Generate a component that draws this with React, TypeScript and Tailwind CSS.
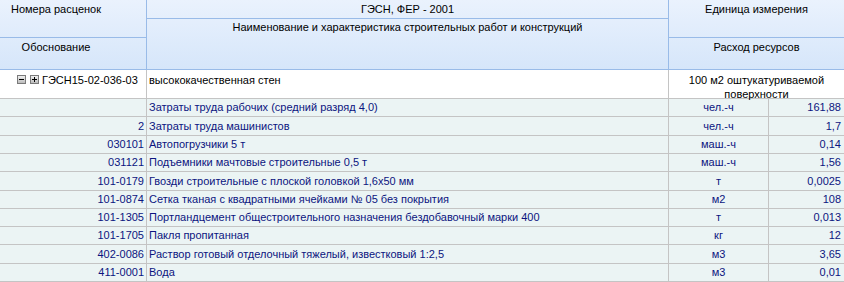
import React from "react";

type Row = { code: string; name: string; unit: string; value: string; h: string };

const rows: Row[] = [
  { code: "", name: "Затраты труда рабочих (средний разряд 4,0)", unit: "чел.-ч", value: "161,88", h: "h-[18px]" },
  { code: "2", name: "Затраты труда машинистов", unit: "чел.-ч", value: "1,7", h: "h-[19px]" },
  { code: "030101", name: "Автопогрузчики 5 т", unit: "маш.-ч", value: "0,14", h: "h-[18px]" },
  { code: "031121", name: "Подъемники мачтовые строительные 0,5 т", unit: "маш.-ч", value: "1,56", h: "h-[18px]" },
  { code: "101-0179", name: "Гвозди строительные с плоской головкой 1,6x50 мм", unit: "т", value: "0,0025", h: "h-[19px]" },
  { code: "101-0874", name: "Сетка тканая с квадратными ячейками № 05 без покрытия", unit: "м2", value: "108", h: "h-[18px]" },
  { code: "101-1305", name: "Портландцемент общестроительного назначения бездобавочный марки 400", unit: "т", value: "0,013", h: "h-[18px]" },
  { code: "101-1705", name: "Пакля пропитанная", unit: "кг", value: "12", h: "h-[18px]" },
  { code: "402-0086", name: "Раствор готовый отделочный тяжелый, известковый 1:2,5", unit: "м3", value: "3,65", h: "h-[19px]" },
  { code: "411-0001", name: "Вода", unit: "м3", value: "0,01", h: "h-[18px]" },
];

const TreeBox = ({ plus }: { plus?: boolean }) => (
  <svg width="9" height="9" viewBox="0 0 9 9" className="shrink-0">
    <defs>
      <linearGradient id={plus ? "gp" : "gm"} x1="0" y1="0" x2="0" y2="1">
        <stop offset="0" stopColor="#f4f4f4" />
        <stop offset="1" stopColor="#b8b8b8" />
      </linearGradient>
    </defs>
    <rect x="0.5" y="0.5" width="8" height="8" fill={`url(#${plus ? "gp" : "gm"})`} stroke="#7a7a7a" />
    <rect x="2" y="4" width="5" height="1" fill="#000" />
    {plus && <rect x="4" y="2" width="1" height="5" fill="#000" />}
  </svg>
);

export default function App() {
  return (
    <div
      className="w-[844px] h-[282px] overflow-hidden bg-white text-[11px] leading-[13px] text-black"
      style={{ fontFamily: '"Liberation Sans", Arial, sans-serif' }}
    >
      {/* header */}
      <div className="flex h-[70px] bg-gradient-to-b from-[#eaf2fd] to-[#d6e6fa] border-b border-[#99bbe8]">
        <div className="w-[147px] flex flex-col border-r border-[#99bbe8]">
          <div className="h-[38px] border-b border-[#99bbe8] pt-[3px] pr-[34px] text-center">Номера расценок</div>
          <div className="flex-1 pt-[3px] pr-[34px] text-center">Обоснование</div>
        </div>
        <div className="w-[522px] flex flex-col border-r border-[#99bbe8]">
          <div className="h-[19px] border-b border-[#99bbe8] pt-[3px] text-center">ГЭСН, ФЕР - 2001</div>
          <div className="flex-1 pt-[2px] text-center">Наименование и характеристика строительных работ и конструкций</div>
        </div>
        <div className="flex-1 flex flex-col">
          <div className="h-[38px] border-b border-[#99bbe8] pt-[3px] text-center">Единица измерения</div>
          <div className="flex-1 pt-[3px] text-center">Расход ресурсов</div>
        </div>
      </div>

      {/* work row */}
      <div className="flex h-[29px] border-b border-[#c4c4c4]">
        <div className="w-[147px] flex items-start border-r border-[#c4c4c4] pl-[17px] pt-[4px] gap-[3px]">
          <div className="flex gap-[4px] pt-[1px]">
            <TreeBox />
            <TreeBox plus />
          </div>
          <span>ГЭСН15-02-036-03</span>
        </div>
        <div className="w-[522px] border-r border-[#c4c4c4] pl-[2px] pt-[4px]">высококачественная стен</div>
        <div className="flex-1 text-center pt-[3px] leading-[14px]">
          100 м2 оштукатуриваемой
          <br />
          поверхности
        </div>
      </div>

      {/* resources */}
      {rows.map((r, i) => (
        <div key={i} className={`flex ${r.h} bg-[#ebf4f4] border-b border-[#c4c4c4] text-[#0c1480]`}>
          <div className="w-[147px] border-r border-[#c4c4c4] flex items-center justify-end pr-[2px]">{r.code}</div>
          <div className="w-[522px] border-r border-[#c4c4c4] flex items-center pl-[2px]">{r.name}</div>
          <div className="w-[100px] border-r border-[#c4c4c4] flex items-center justify-center">{r.unit}</div>
          <div className="flex-1 flex items-center justify-end pr-[3px]">{r.value}</div>
        </div>
      ))}
    </div>
  );
}
